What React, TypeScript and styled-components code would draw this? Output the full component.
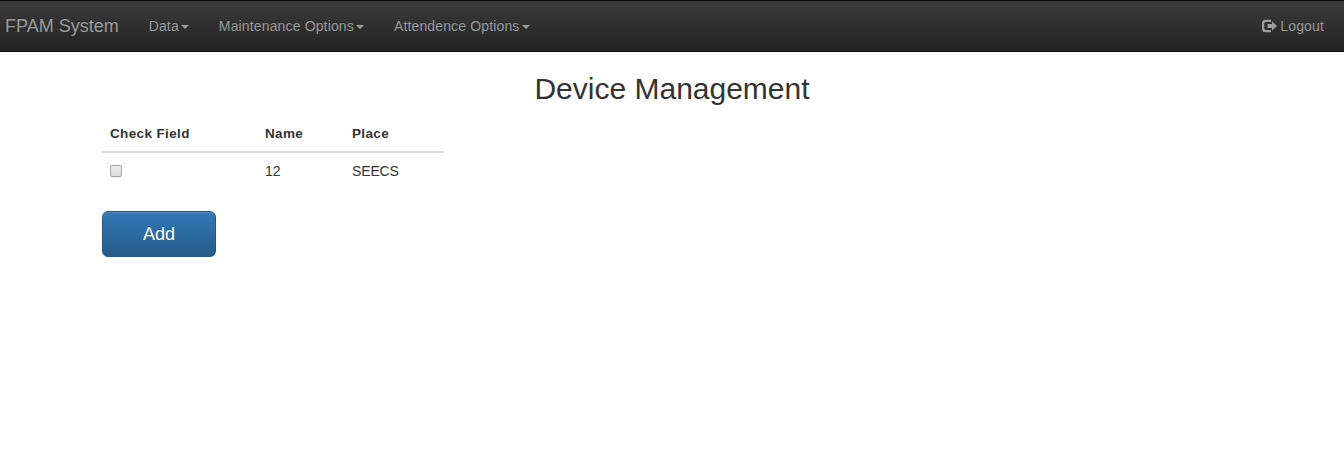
import React from "react";
import styled, { createGlobalStyle } from "styled-components";

const GlobalStyle = createGlobalStyle`
  *, *::before, *::after { box-sizing: border-box; }
  body {
    margin: 0;
    background: #fff;
    color: #333;
    font-family: "Liberation Sans", Arial, sans-serif;
    font-size: 14px;
    line-height: 20px;
  }
`;

const Navbar = styled.nav`
  display: flex;
  height: 52px;
  padding: 0 5px;
  border: 1px solid #080808;
  border-width: 1px 0;
  background: linear-gradient(to bottom, #3c3c3c 0%, #222 100%);
  color: #9d9d9d;
  text-shadow: 0 -1px 0 rgba(0, 0, 0, 0.25);
`;

const Brand = styled.a`
  padding: 15px 15px 15px 0;
  font-size: 18px;
`;

const Menu = styled.div`
  display: flex;
  flex: 1;
`;

const NavItem = styled.a<{ $end?: boolean }>`
  display: flex;
  align-items: center;
  height: 50px;
  padding: 0 15px;
  margin-left: ${(p) => (p.$end ? "auto" : "0")};
  letter-spacing: 0.145px;
`;

const Caret = styled.span`
  border: 4px solid transparent;
  border-top-color: currentColor;
  border-bottom: 0;
  margin: 1px 0 0 2px;
`;

const LogoutIcon = styled.svg`
  width: 15px;
  height: 14px;
  margin: -1px 3px 0 0;
`;

const Title = styled.h2`
  margin: 20px 0 10px;
  font-size: 30px;
  font-weight: 400;
  line-height: 33px;
  text-align: center;
`;

const Content = styled.main`
  padding-left: 102px;
`;

const Table = styled.table`
  width: 342px;
  margin-bottom: 22px;
  border-collapse: collapse;
  table-layout: fixed;
`;

const HeadCell = styled.th<{ $width: number }>`
  width: ${(p) => p.$width}px;
  padding: 9px 8px 7px;
  border-bottom: 2px solid #ddd;
  font-size: 13.5px;
  letter-spacing: 0.37px;
  text-align: left;
`;

const Cell = styled.td`
  height: 36px;
  padding: 8px;
  letter-spacing: -0.15px;
`;

const Checkbox = styled.input`
  display: block;
  appearance: none;
  width: 12px;
  height: 12px;
  margin: 0;
  border: 1px solid #a4a4a4;
  border-radius: 2px;
  background: linear-gradient(#eee, #ddd);
  box-shadow: 0 1px 0 rgba(0, 0, 0, 0.06);
`;

const AddButton = styled.button`
  width: 114px;
  height: 46px;
  border: 1px solid #245580;
  border-radius: 6px;
  background: linear-gradient(to bottom, #337ab7 0%, #265a88 100%);
  box-shadow: inset 0 1px 0 rgba(255, 255, 255, 0.15), 0 1px 1px rgba(0, 0, 0, 0.075);
  color: #fff;
  font: 18px/24px "Liberation Sans", Arial, sans-serif;
  text-shadow: 0 -1px 0 rgba(0, 0, 0, 0.2);
`;

const menus = ["Data", "Maintenance Options", "Attendence Options"];

export default function App() {
  return (
    <>
      <GlobalStyle />
      <Navbar>
        <Brand>FPAM System</Brand>
        <Menu>
          {menus.map((label) => (
            <NavItem key={label}>
              {label}
              <Caret />
            </NavItem>
          ))}
          <NavItem $end>
            <LogoutIcon viewBox="0 0 15 14" fill="currentColor">
              <path d="M9 .7H3.500Q0 .7 0 4.200v5.600Q0 13.300 3.500 13.300H9v-2.300H3.700Q2.300 11 2.300 9.600V4.400Q2.300 3 3.700 3H9z" />
              <path d="M10 2.200 15 7l-5 4.800V9H5.500V5H10z" />
            </LogoutIcon>
            Logout
          </NavItem>
        </Menu>
      </Navbar>
      <Title>Device Management</Title>
      <Content>
        <Table>
          <thead>
            <tr>
              <HeadCell $width={155}>Check Field</HeadCell>
              <HeadCell $width={87}>Name</HeadCell>
              <HeadCell $width={100}>Place</HeadCell>
            </tr>
          </thead>
          <tbody>
            <tr>
              <Cell>
                <Checkbox type="checkbox" aria-label="Select device 12" />
              </Cell>
              <Cell>12</Cell>
              <Cell>SEECS</Cell>
            </tr>
          </tbody>
        </Table>
        <AddButton>Add</AddButton>
      </Content>
    </>
  );
}
